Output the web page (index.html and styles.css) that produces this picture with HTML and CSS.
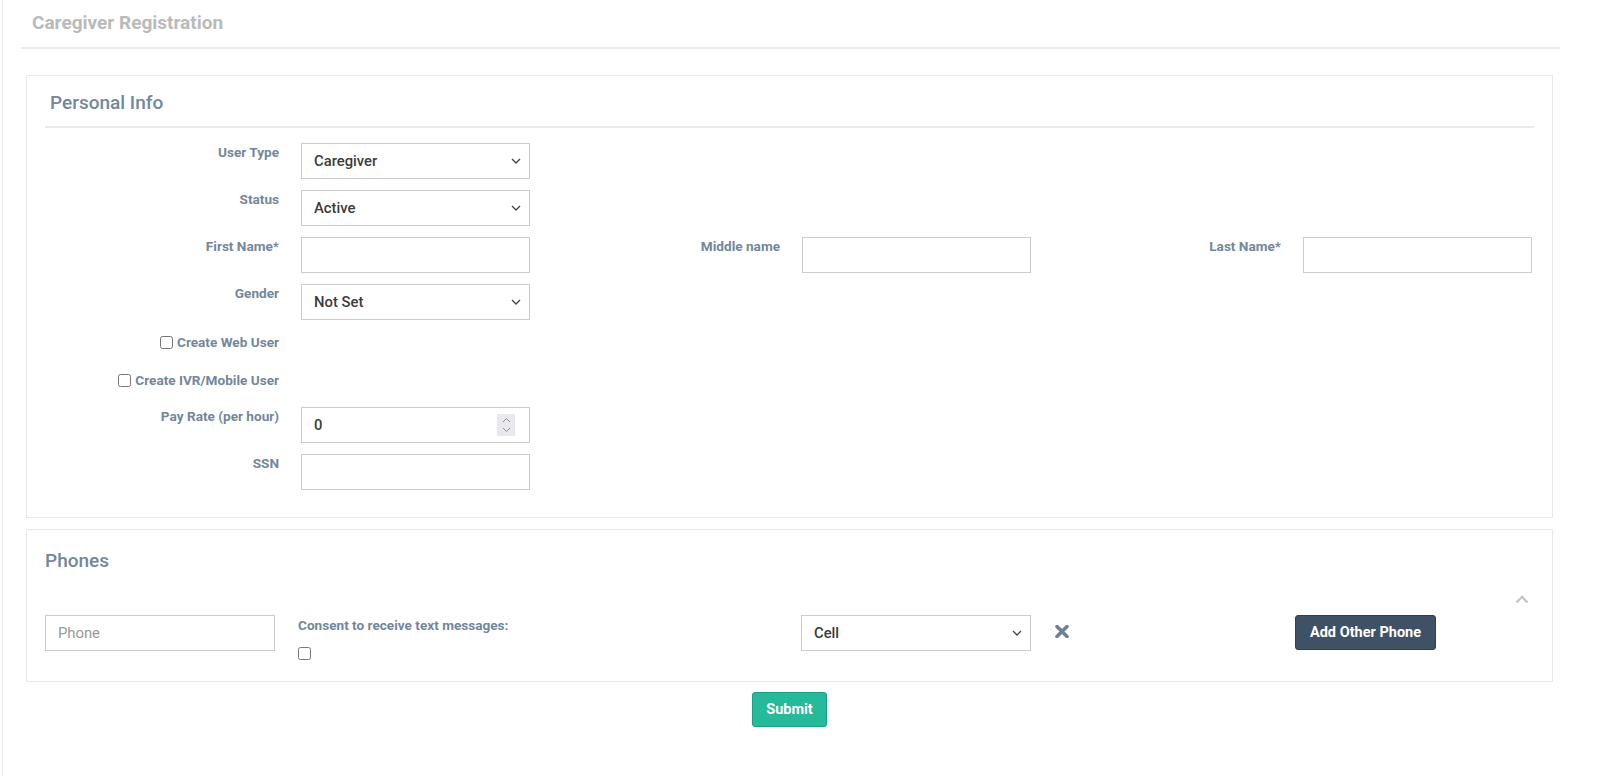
FILE: index.html
```html
<!DOCTYPE html>
<html lang="en">
<head>
    <meta charset="UTF-8">
    <title>Caregiver Registration</title>
    <link rel="stylesheet" href="styles.css">
</head>
<body>
<div class="page">

    <!-- page title -->
    <div class="page-title">
        <h3>Caregiver Registration</h3>
    </div>

    <!-- Personal Info -->
    <div class="x-panel personal">
        <div class="x-title">
            <h2>Personal Info</h2>
        </div>
        <div class="x-content">
            <div class="form-row">
                <div class="group">
                    <label class="control-label">User Type</label>
                    <select class="form-control"><option>Caregiver</option></select>
                </div>
            </div>
            <div class="form-row">
                <div class="group">
                    <label class="control-label">Status</label>
                    <select class="form-control"><option>Active</option></select>
                </div>
            </div>
            <div class="form-row">
                <div class="group">
                    <label class="control-label">First Name*</label>
                    <input class="form-control" type="text">
                </div>
                <div class="group">
                    <label class="control-label">Middle name</label>
                    <input class="form-control" type="text">
                </div>
                <div class="group">
                    <label class="control-label">Last Name*</label>
                    <input class="form-control" type="text">
                </div>
            </div>
            <div class="form-row">
                <div class="group">
                    <label class="control-label">Gender</label>
                    <select class="form-control"><option>Not Set</option></select>
                </div>
            </div>
            <div class="form-row check-row">
                <div class="group">
                    <label class="control-label check-label"><input type="checkbox"> Create Web User</label>
                </div>
            </div>
            <div class="form-row check-row">
                <div class="group">
                    <label class="control-label check-label"><input type="checkbox"> Create IVR/Mobile User</label>
                </div>
            </div>
            <div class="form-row">
                <div class="group">
                    <label class="control-label">Pay Rate (per hour)</label>
                    <div class="num-wrap">
                        <input class="form-control" type="text" value="0">
                        <span class="spin">
                            <svg width="9" height="16" viewBox="0 0 9 16"><path d="M1 5 L4.5 1.5 L8 5 M1 11 L4.5 14.5 L8 11" fill="none" stroke="#8a8a8f" stroke-width="1"/></svg>
                        </span>
                    </div>
                </div>
            </div>
            <div class="form-row">
                <div class="group">
                    <label class="control-label">SSN</label>
                    <input class="form-control" type="text">
                </div>
            </div>
        </div>
    </div>

    <!-- Phones -->
    <div class="x-panel phones">
        <div class="x-title plain">
            <h2>Phones</h2>
        </div>
        <a class="collapse-link" href="#">
            <svg width="14" height="9" viewBox="0 0 14 9"><path d="M1.5 7.5 L7 2 L12.5 7.5" fill="none" stroke="#c3c6ca" stroke-width="2.4"/></svg>
        </a>
        <div class="phone-row">
            <div><input class="form-control" type="text" placeholder="Phone"></div>
            <div class="consent">
                <label>Consent to receive text messages:</label>
                <input type="checkbox">
            </div>
            <div><select class="form-control"><option>Cell</option></select></div>
            <div class="remove">
                <svg width="14" height="13" viewBox="0 0 14 13"><path d="M2 1.5 L12 11.5 M12 1.5 L2 11.5" stroke="#6f8196" stroke-width="3.6" stroke-linecap="round"/></svg>
            </div>
            <div><button class="btn btn-dark">Add Other Phone</button></div>
        </div>
    </div>

    <div class="actions">
        <button class="btn btn-success">Submit</button>
    </div>

</div>
</body>
</html>
```

FILE: styles.css
```css
body {
    margin: 0;
    font-family: Roboto, "Helvetica Neue", Arial, sans-serif;
    color: #73879c;
    background: #fff;
}

.page {
    margin-left: 2px;
    width: 1557px;
    min-height: 776px;
    border-left: 1px solid #ececf1;
}

/* title bar */
.page-title {
    margin-left: 18px;
    padding: 12px 0 14px 11px;
    border-bottom: 2px solid #e6e9ed;
}

.page-title h3 {
    margin: 0;
    font-size: 19px;
    line-height: 21px;
    font-weight: 700;
    color: #bababa;
}

/* panels */
.x-panel {
    position: relative;
    margin-left: 23px;
    width: 1527px;
    border: 1px solid #e6e9ed;
    background: #fff;
    padding: 0 18px;
    box-sizing: border-box;
}

.personal {
    margin-top: 26px;
}

.x-title {
    padding: 16px 0 12px 5px;
    border-bottom: 2px solid #e6e9ed;
}

.x-title h2 {
    margin: 0;
    font-size: 19px;
    line-height: 22px;
    font-weight: 500;
    color: #73879c;
}

.x-title.plain {
    border-bottom: none;
    padding: 20px 0 0 0;
}

.x-content {
    padding: 15px 0 27px 0;
}

/* form rows */
.form-row {
    display: flex;
    gap: 16px;
    margin-bottom: 11px;
}

.form-row:last-child {
    margin-bottom: 0;
}

.group {
    display: flex;
    gap: 22px;
    width: 485px;
}

.control-label {
    width: 234px;
    text-align: right;
    font-size: 13.6px;
    font-weight: 700;
    line-height: 16px;
    padding-top: 1px;
    color: #73879c;
}

.check-row {
    height: 27px;
}

.check-label {
    display: flex;
    justify-content: flex-end;
    align-items: center;
    gap: 4px;
    padding-top: 3px;
    height: 16px;
}

.check-label input {
    margin: 0;
    width: 13px;
    height: 13px;
}

.form-control {
    box-sizing: border-box;
    width: 229px;
    height: 36px;
    border: 1px solid #ccc;
    border-radius: 0;
    background: #fff;
    padding: 0 12px;
    font-family: Roboto, "Helvetica Neue", Arial, sans-serif;
    font-size: 14.8px;
    font-weight: 500;
    color: #3b3b3b;
}

select.form-control {
    -webkit-appearance: none;
    appearance: none;
    background-image: url("data:image/svg+xml,%3Csvg xmlns='http://www.w3.org/2000/svg' width='10' height='6' viewBox='0 0 10 6'%3E%3Cpath d='M1 1 L5 5 L9 1' fill='none' stroke='%23444' stroke-width='1.3'/%3E%3C/svg%3E");
    background-repeat: no-repeat;
    background-position: right 8px center;
}

.form-control::placeholder {
    color: #999;
    font-weight: 400;
}

.num-wrap {
    position: relative;
}

.spin {
    position: absolute;
    right: 15px;
    top: 7px;
    width: 18px;
    height: 22px;
    background: #e9e9ed;
    display: flex;
    align-items: center;
    justify-content: center;
}

/* phones */
.phones {
    margin-top: 11px;
    padding-bottom: 17px;
}

.collapse-link {
    position: absolute;
    right: 23px;
    top: 59px;
}

.phone-row {
    display: grid;
    grid-template-columns: 253px 503px 254px 240px 140px;
    margin-top: 43px;
}

.phone-row .form-control {
    width: 230px;
}

.consent label {
    display: block;
    font-size: 13.6px;
    font-weight: 700;
    line-height: 16px;
    margin-top: 2px;
    color: #73879c;
}

.consent input {
    margin: 14px 0 0 0;
    width: 13px;
    height: 13px;
}

.remove {
    padding-top: 8px;
}

.btn {
    font-family: Roboto, "Helvetica Neue", Arial, sans-serif;
    font-size: 14.5px;
    font-weight: 700;
    color: #fff;
    border-radius: 3px;
    height: 35px;
    cursor: pointer;
}

.btn-dark {
    width: 141px;
    background: #3e5165;
    border: 1px solid #2f3f50;
}

.btn-success {
    width: 75px;
    background: #26b99a;
    border: 1px solid #169f85;
}

.actions {
    margin-left: 23px;
    width: 1527px;
    display: flex;
    justify-content: center;
    padding-top: 10px;
}
```
